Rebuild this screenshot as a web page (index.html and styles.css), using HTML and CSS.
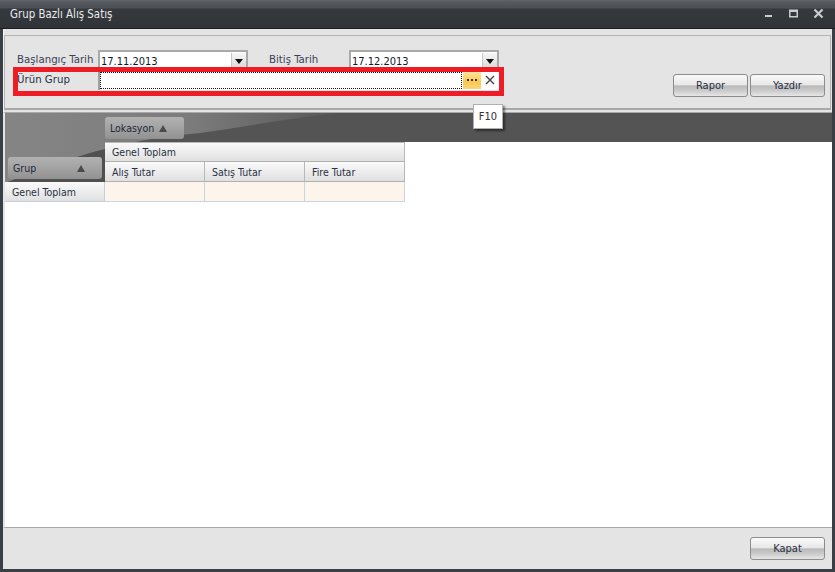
FILE: index.html
```html
<!DOCTYPE html>
<html lang="tr">
<head>
<meta charset="utf-8">
<title>Grup Bazlı Alış Satış</title>
<link rel="stylesheet" href="styles.css">
</head>
<body>
<div class="window">
  <header class="titlebar">
    <span class="title">Grup Bazlı Alış Satış</span>
    <div class="controls">
      <svg width="11" height="11" viewBox="0 0 11 11"><rect x="2" y="7" width="7" height="2" fill="#c9ccd0"/></svg>
      <svg width="11" height="11" viewBox="0 0 11 11"><path d="M1 1.500h9v8h-9z M2.500 4v4h6v-4z" fill="#c9ccd0" fill-rule="evenodd"/></svg>
      <svg width="11" height="11" viewBox="0 0 11 11"><path d="M1.500 1.500l8 8M9.500 1.500l-8 8" stroke="#c9ccd0" stroke-width="2.200" fill="none"/></svg>
    </div>
  </header>
  <main class="body">
    <section class="filters">
      <div class="filter-box">
        <div class="fields">
          <div class="row">
            <label class="lbl">Başlangıç Tarih</label>
            <div class="combo"><span>17.11.2013</span><b class="drop"><i></i></b></div>
            <label class="lbl second">Bitiş Tarih</label>
            <div class="combo"><span>17.12.2013</span><b class="drop"><i></i></b></div>
          </div>
          <div class="row">
            <label class="lbl first">Ürün Grup</label>
            <div class="lookup">
              <div class="focus"></div>
              <b class="dots"><i></i><i></i><i></i></b>
              <svg class="clear" width="16" height="16" viewBox="0 0 16 16"><path d="M4 4l8 8M12 4l-8 8" stroke="#444" stroke-width="1.400" fill="none"/></svg>
            </div>
          </div>
        </div>
        <div class="actions">
          <button class="btn">Rapor</button>
          <button class="btn">Yazdır</button>
        </div>
      </div>
    </section>
    <section class="pivot-wrap">
      <div class="pivot">
        <svg class="swoosh" width="340" height="70" viewBox="0 0 340 70">
          <defs><linearGradient id="sw" x1="0" x2="1" y1="0" y2="0"><stop offset="0" stop-color="#858585"/><stop offset="0.55" stop-color="#7c7c7c"/><stop offset="1" stop-color="#565656"/></linearGradient></defs>
          <path d="M0 70 C40 55 100 28 195 20 C240 14 290 4 335 0 L0 0Z" fill="url(#sw)"/>
        </svg>
        <div class="corner">
          <div class="chip grp"><span>Grup</span><i class="tri"></i></div>
        </div>
        <div class="band">
          <div class="chip loc"><span>Lokasyon</span><i class="tri"></i></div>
        </div>
        <div class="hd total">Genel Toplam</div>
        <div class="hd m">Alış Tutar</div>
        <div class="hd m">Satış Tutar</div>
        <div class="hd m">Fire Tutar</div>
        <div class="hd rowh">Genel Toplam</div>
        <div class="cell"></div>
        <div class="cell"></div>
        <div class="cell"></div>
      </div>
    </section>
    <footer class="footer"><button class="btn">Kapat</button></footer>
  </main>
  <div class="annot"></div>
  <div class="tip">F10</div>
</div>
</body>
</html>
```
FILE: styles.css
```css
* { box-sizing: border-box; }
html, body { margin: 0; padding: 0; }
body { font-family: "DejaVu Sans", "Liberation Sans", sans-serif; font-stretch: condensed; font-size: 11px; color: #2a3145; }
.window { position: relative; width: 835px; height: 572px; background: #3a3f45; display: flex; flex-direction: column; overflow: hidden; }
.titlebar { height: 29px; flex: none; display: flex; align-items: center; justify-content: space-between; padding: 0 8px 0 10px;
  background: linear-gradient(#62666b 0, #565a5f 2px, #4c5055 8px, #36393e 9px, #303338 100%); border-bottom: 1px solid #1c1e22; }
.title { color: #e8eaec; font-size: 11.4px; }
.controls { display: flex; gap: 14px; margin-right: 3px; position: relative; top: -1px; }
.body { flex: 1; margin: 0 3px 3px 3px; background: #e4e4e4; display: flex; flex-direction: column; min-height: 0; }
.filters { height: 83px; flex: none; padding: 6px 1px 0 1px; border-left: 1px solid #f4f4f4; }
.filter-box { height: 75px; border: 1px solid #b4b4b4; border-bottom: 2px solid #a8a8a8; display: flex; justify-content: space-between; padding: 14px 5px 0 12px; margin-left: -1px; }
.row { display: flex; align-items: center; height: 20px; }
.lbl { width: 81px; white-space: nowrap; color: #3a4156; font-size: 11.35px; position: relative; top: -1px; }
.lbl.second { width: 80px; margin-left: 21px; }
.lbl.first { color: #2a3145; }
.combo { width: 150px; height: 20px; border: 2px solid #a9a9a9; border-bottom: 0; background: #fff; display: flex; justify-content: space-between; color: #14182a; padding-left: 1px; align-items: center; }
.drop { width: 15px; height: 16px; background: linear-gradient(#f6f6f6, #d8d8d8); border-left: 1px solid #c8c8c8; display: flex; align-items: center; justify-content: center; }
.drop i { width: 0; height: 0; border: 4px solid transparent; border-top: 5px solid #111; border-bottom: 0; }
.lookup { width: 401px; height: 20px; background: #fff; border-left: 2px solid #a0a0a0; display: flex; align-items: center; }
.focus { width: 362px; height: 17px; border: 1px dotted #111; flex: none; }
.dots { width: 18px; height: 18px; margin-left: 1px; background: linear-gradient(#ffe9a8, #fbc94a 60%, #f7d680); display: flex; align-items: center; justify-content: center; gap: 2px; }
.dots i { width: 2px; height: 2px; background: #333; }
.clear { margin-left: 1px; }
.actions { display: flex; gap: 2px; align-items: flex-end; padding-bottom: 11px; }
.btn { width: 75px; height: 23px; border: 1px solid #8c8c8c; border-radius: 3px; padding: 0; color: #2a3145; font: inherit;
  background: linear-gradient(#fafafa 0, #e8e8e8 46%, #bababa 52%, #c8c8c8 72%, #e6e6e6 100%); }
.pivot-wrap { flex: 1; background: #fff; border-top: 1px solid #a8a8a8; border-left: 2px solid #e4e4e4; border-bottom: 1px solid #a8a8a8; min-height: 0; font-size: 10.5px; }
.pivot { position: relative; display: grid; grid-template-columns: 100px 100px 100px 100px 1fr; grid-template-rows: 29px 20px 20px 20px; }
.swoosh { position: absolute; left: 0; top: 0; z-index: 1; }
.band { grid-column: 2 / 6; grid-row: 1; background: #545454; display: flex; align-items: flex-end; padding-bottom: 3px; }
.corner { grid-column: 1; grid-row: 1 / 4; background: #505050; display: flex; align-items: flex-end; padding: 0 3px 3px 3px; }
.chip { position: relative; z-index: 2; display: flex; align-items: center; height: 22px; border-radius: 3px; background: linear-gradient(#b2b2b2, #929292); color: #22283a; }
.chip .tri { width: 0; height: 0; border: 4px solid transparent; border-top: 0; border-bottom: 7px solid #4a4a4a; }
.grp { width: 94px; justify-content: space-between; padding: 0 17px 0 5px; }
.loc { width: 79px; gap: 5px; padding: 0 6px 0 5px; }
.hd { position: relative; z-index: 2; background: linear-gradient(#fafafa, #e0e0e0); border-right: 1px solid #b8b8b8; border-bottom: 1px solid #b0b0b0; display: flex; align-items: center; padding-left: 7px; color: #2a3145; white-space: nowrap; }
.total { grid-column: 2 / 5; grid-row: 2; border-top: 1px solid #b8b8b8; }
.m { grid-row: 3; padding-top: 1px; }
.rowh { grid-column: 1; grid-row: 4; border-bottom: 1px solid #c4d0e0; border-right: 1px solid #c4d0e0; padding-top: 1px; }
.cell { grid-row: 4; background: #fdf5ec; border-right: 1px solid #c8d4e2; border-bottom: 1px solid #c8d4e2; }
.footer { height: 41px; flex: none; display: flex; justify-content: flex-end; align-items: flex-start; padding: 9px 7px 0 0; background: #e4e4e4; }
.annot { position: absolute; left: 13px; top: 67px; width: 491px; height: 29px; border: 5px solid #ee1c25; pointer-events: none; }
.tip { position: absolute; left: 473px; top: 104px; width: 30px; height: 25px; background: #fff; border: 1px solid #b0b0b0; box-shadow: 2px 2px 2px rgba(0,0,0,.45); color: #333; display: flex; align-items: center; justify-content: center; }
```
